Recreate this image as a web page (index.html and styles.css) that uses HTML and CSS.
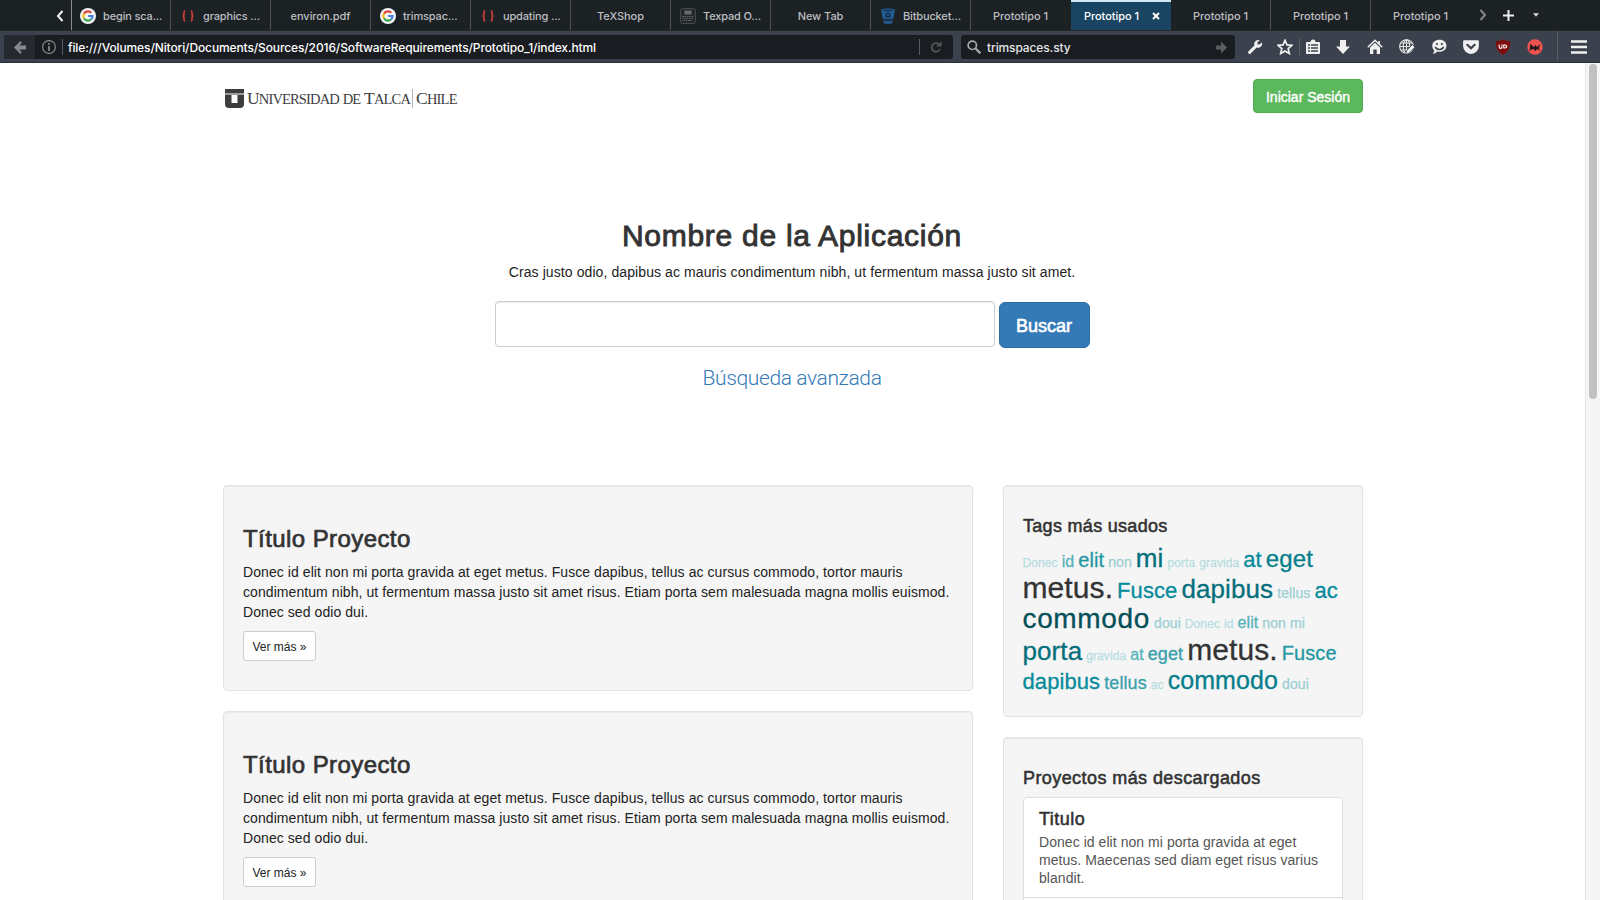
FILE: index.html
```html
<!DOCTYPE html>
<html lang="es">
<head>
<meta charset="utf-8">
<title>Prototipo 1</title>
<link rel="stylesheet" href="styles.css">
</head>
<body>
<svg class="defs" width="0" height="0">
  <symbol id="google" viewBox="0 0 16 16">
    <circle cx="8" cy="8" r="8" fill="#f4f4f4"/>
    <g fill="none" stroke-width="2.1">
      <path d="M4 5.6A4.6 4.6 0 0 1 11.3 4.8" stroke="#e2443a"/>
      <path d="M4 5.6a4.6 4.6 0 0 0 0 4.8" stroke="#f2b90f"/>
      <path d="M4 10.4a4.6 4.6 0 0 0 7.2.9" stroke="#35a551"/>
      <path d="M11.2 11.3A4.6 4.6 0 0 0 12.6 8H8.2" stroke="#447fe8"/>
    </g>
  </symbol>
  <symbol id="braces" viewBox="0 0 16 16">
    <path d="M5.3 3C3.6 3 4 4.600 4 6c0 1.300-.4 2-1.500 2C3.600 8 4 8.700 4 10c0 1.400-.4 3 1.300 3M10.700 3C12.400 3 12 4.600 12 6c0 1.300.4 2 1.500 2C12.400 8 12 8.700 12 10c0 1.400.4 3-1.300 3" fill="none" stroke="#b93a3a" stroke-width="1.900"/>
  </symbol>
</svg>
<header class="chrome">
  <div class="tabs">
    <div class="tabs-start"><svg width="8" height="12" viewBox="0 0 8 12"><path d="M6.500 1 2 6l4.500 5" fill="none" stroke="#f2f2f2" stroke-width="2"/></svg></div>
    <div class="tab with-icon first"><svg class="fav"><use href="#google"/></svg><span class="t-a">begin sca...</span></div>
    <div class="tab with-icon"><svg class="fav"><use href="#braces"/></svg><span class="t-a">graphics ...</span></div>
    <div class="tab"><span>environ.pdf</span></div>
    <div class="tab with-icon"><svg class="fav"><use href="#google"/></svg><span class="t-a">trimspac...</span></div>
    <div class="tab with-icon"><svg class="fav"><use href="#braces"/></svg><span class="t-a">updating ...</span></div>
    <div class="tab"><span>TeXShop</span></div>
    <div class="tab with-icon"><svg class="fav" viewBox="0 0 16 16"><rect x=".5" y=".5" width="15" height="15" rx="2" fill="#24272a" stroke="#484a4c"/><path d="M4.500 2.500h7v4h-7z" fill="#66686a"/><path d="M2.500 8.500h11M2.500 10.500h11M3.500 12.500h9" stroke="#66686a" stroke-dasharray="1.500 .8"/></svg><span class="t-a">Texpad O...</span></div>
    <div class="tab"><span>New Tab</span></div>
    <div class="tab with-icon"><svg class="fav" viewBox="0 0 16 16"><path d="M1 2c0-2 14-2 14 0l-1.600 8.500c-1 1.500-9.800 1.500-10.800 0z" fill="#22598f"/><path d="M3 12c2 1.300 8 1.300 10 0l-.6 3c-1.400 1.300-7.400 1.300-8.800 0z" fill="#22598f"/><ellipse cx="8" cy="2.300" rx="5" ry=".9" fill="#173a5c"/><circle cx="8" cy="7.300" r="1.900" fill="none" stroke="#152638" stroke-width="1.200"/></svg><span class="t-a">Bitbucket...</span></div>
    <div class="tab no-sep"><span>Prototipo 1</span></div>
    <div class="tab active"><span>Prototipo 1</span><svg class="close" width="8" height="8" viewBox="0 0 8 8"><path d="m1 1 6 6m0-6L1 7" stroke="#fff" stroke-width="2"/></svg></div>
    <div class="tab"><span>Prototipo 1</span></div>
    <div class="tab"><span>Prototipo 1</span></div>
    <div class="tab no-sep"><span>Prototipo 1</span></div>
    <div class="tabs-end">
      <svg width="8" height="12" viewBox="0 0 8 12"><path d="M1.500 1 6 6l-4.500 5" fill="none" stroke="#85888a" stroke-width="2"/></svg>
      <svg width="11" height="11" viewBox="0 0 11 11"><path d="M5.500 0v11M0 5.500h11" stroke="#eee" stroke-width="2"/></svg>
      <svg width="6" height="4" viewBox="0 0 6 4"><path d="M0 .3h6L3 3.700z" fill="#ddd"/></svg>
    </div>
  </div>
  <div class="toolbar">
    <div class="url">
      <div class="back"><svg width="12" height="13" viewBox="0 0 12 13"><path d="M0 6.500 6.500 0v0l1.300 1.400L5.600 4.500H12v4H5.600l2.200 3.100L6.500 13z" fill="#85898c"/></svg></div>
      <svg class="info" width="14" height="14" viewBox="0 0 14 14"><circle cx="7" cy="7" r="6.400" fill="none" stroke="#8b8e90" stroke-width="1.100"/><path d="M7 3v1.700M7 6v5" stroke="#8b8e90" stroke-width="1.700"/></svg>
      <i class="bar"></i>
      <span class="address">file:///Volumes/Nitori/Documents/Sources/2016/SoftwareRequirements/Prototipo_1/index.html</span>
      <i class="bar end"></i>
      <svg class="reload" width="12" height="12" viewBox="0 0 12 12"><path d="M9 3.300A4.300 4.300 0 1 0 10 8" fill="none" stroke="#505356" stroke-width="1.800"/><path d="M11.500 0v5.500H6z" fill="#505356"/></svg>
    </div>
    <div class="search">
      <svg width="14" height="14" viewBox="0 0 14 14"><circle cx="5.300" cy="5.300" r="4.200" fill="none" stroke="#a5a7a9" stroke-width="1.700"/><path d="m8.300 8.300 5 5" stroke="#a5a7a9" stroke-width="2.300"/></svg>
      <span class="query">trimspaces.sty</span>
      <svg width="11" height="13" viewBox="0 0 11 13"><path d="M0 4.500h5V.5l6 6-6 6v-4H0z" fill="#5b5e60"/></svg>
    </div>
    <div class="tools">
      <svg viewBox="0 0 16 16"><path d="m2.600 13.400 6-6" stroke="#f0f0f0" stroke-width="3" stroke-linecap="round"/><path d="M12.800 1.300A4.200 4.200 0 0 0 7.300 6.200L9.800 8.700a4.200 4.200 0 0 0 5-5.500L12.500 5.500l-2-.3-.2-1.700z" fill="#f0f0f0"/></svg>
      <svg viewBox="0 0 16 16"><path d="m8 1.300 2 4.600 4.900.4-3.700 3.300 1.100 4.900L8 11.900l-4.300 2.600 1.100-4.900L1.100 6.300 6 5.900z" fill="none" stroke="#f0f0f0" stroke-width="1.700"/></svg>
      <i class="bar"></i>
      <svg viewBox="0 0 16 16"><path d="M2 3h3.500a2.500 2.500 0 0 1 5 0H14a1 1 0 0 1 1 1v10a1 1 0 0 1-1 1H2a1 1 0 0 1-1-1V4a1 1 0 0 1 1-1z" fill="#f0f0f0"/><path d="M3 6h2m1 0h7M3 9h2m1 0h7M3 12h2m1 0h7" stroke="#3c424d" stroke-width="1.400"/></svg>
      <svg viewBox="0 0 16 16"><path d="M5 1h6v6.500h4L8 15 1 7.500h4z" fill="#f0f0f0"/></svg>
      <svg viewBox="0 0 16 16"><path d="M.8 8.300 8 1.300l7.200 7" fill="none" stroke="#f0f0f0" stroke-width="1.600"/><path d="M11.300 2H13v3.500L11.300 4zM3 8.500l5-4.800 5 4.800V15H9.700v-4.500H6.300V15H3z" fill="#f0f0f0"/></svg>
      <svg viewBox="0 0 16 16"><g fill="none" stroke="#e8e8e8" stroke-width="1.100"><circle cx="7.500" cy="7.500" r="6.800"/><ellipse cx="7.500" cy="7.500" rx="3.300" ry="6.800"/><path d="M.7 7.500h13.600M1.700 4h11.600M1.700 11h11.600M7.500.7v13.600"/></g><path d="m6.500 15.800 1-4L13.300 5.500l2.700 2.700-5.800 6z" fill="#f0f0f0" stroke="#3c424d" stroke-width="1"/></svg>
      <svg viewBox="0 0 16 16"><path d="M8.500.8c4.200 0 6.900 2.500 6.900 6s-2.700 6-6.900 6c-.8 0-1.600 0-2.300-.3-1.200 1.600-2.700 2.300-4.700 2.200 1.200-.8 1.700-2 1.600-3.500C1.800 10 1.300 8.500 1.300 6.800c0-3.500 3-6 7.200-6z" fill="#f0f0f0"/><circle cx="6" cy="5" r="1.100" fill="#3c424d"/><circle cx="10.800" cy="5" r="1.100" fill="#3c424d"/><path d="M4.300 7.800c1 3.600 7.300 3.600 8.300 0" fill="none" stroke="#3c424d" stroke-width="1.500"/></svg>
      <svg viewBox="0 0 16 16"><path d="M1.300 1.200h13.400a1.200 1.200 0 0 1 1.200 1.200V7A7.900 7.900 0 0 1 .1 7V2.400a1.200 1.200 0 0 1 1.200-1.200z" fill="#f0f0f0"/><path d="M4.300 5.800 8 9.300l3.700-3.500" fill="none" stroke="#3c424d" stroke-width="2.200" stroke-linecap="round"/></svg>
      <svg viewBox="0 0 16 16"><path d="M8 .2c2 1.400 4 1.900 7 1.900C15.200 8.500 14 12.400 8 15.800 2 12.400.8 8.500 1 2.100 4 2.100 6 1.600 8 .2z" fill="#800b0b"/><path d="M4.200 5.500V8c0 1.800 2.800 1.800 2.800 0V5.500M8.800 6v3h1c2.600 0 2.600-3 0-3z" fill="none" stroke="#fff" stroke-width="1.100"/></svg>
      <svg viewBox="0 0 16 16"><circle cx="8" cy="8" r="7.700" fill="#ef5350"/><path d="m2.500 12 1-7.500L6.500 8l2.200-2L9.800 8l3.700-3-1.800 4.200 1.500 3L10.500 10l-2.300 2-2.200-2.300z" fill="#25191b"/></svg>
    </div>
    <i class="bar tall"></i>
    <svg class="menu" width="16" height="14" viewBox="0 0 16 14"><path d="M0 1.500h16M0 7h16M0 12.500h16" stroke="#f0f0f0" stroke-width="2.600"/></svg>
  </div>
</header>
<div class="viewport">
  <main class="container">
    <div class="masthead">
      <div class="logo">
        <svg width="19" height="19" viewBox="0 0 19 19"><path d="M0 0h19v4.500H0zM0 5.600h19v9.400a4 4 0 0 1-4 4H4a4 4 0 0 1-4-4z" fill="#3d3d3f"/><path d="M6.500 6h6v8h-6z" fill="#fff"/></svg>
        <span class="uni"><b>U</b>NIVERSIDAD DE <b>T</b>ALCA</span><i></i><span class="chile"><b>C</b>HILE</span>
      </div>
      <button class="btn login">Iniciar Sesión</button>
    </div>
    <section class="hero">
      <h2>Nombre de la Aplicación</h2>
      <p>Cras justo odio, dapibus ac mauris condimentum nibh, ut fermentum massa justo sit amet.</p>
      <form class="finder"><input type="text" aria-label="Buscar"><button class="btn buscar" type="button">Buscar</button></form>
      <a class="advanced">Búsqueda avanzada</a>
    </section>
    <div class="columns">
      <div class="projects">
        <article class="well project">
          <h3>Título Proyecto</h3>
          <p>Donec id elit non mi porta gravida at eget metus. Fusce dapibus, tellus ac cursus commodo, tortor mauris<br>condimentum nibh, ut fermentum massa justo sit amet risus. Etiam porta sem malesuada magna mollis euismod.<br>Donec sed odio dui.</p>
          <button class="btn more">Ver más »</button>
        </article>
        <article class="well project">
          <h3>Título Proyecto</h3>
          <p>Donec id elit non mi porta gravida at eget metus. Fusce dapibus, tellus ac cursus commodo, tortor mauris<br>condimentum nibh, ut fermentum massa justo sit amet risus. Etiam porta sem malesuada magna mollis euismod.<br>Donec sed odio dui.</p>
          <button class="btn more">Ver más »</button>
        </article>
      </div>
      <aside class="side">
        <section class="well tags">
          <h4>Tags más usados</h4>
          <div class="row r1"><a class="s12">Donec</a><a class="s16">id</a><a class="s20">elit</a><a class="s14">non</a><a class="s26">mi</a><a class="s12">porta</a><a class="s12">gravida</a><a class="s22">at</a><a class="s24">eget</a></div>
          <div class="row r2"><a class="s30">metus.</a><a class="s22">Fusce</a><a class="s26">dapibus</a><a class="s14">tellus</a><a class="s22">ac</a></div>
          <div class="row r3"><a class="s28">commodo</a><a class="s14">doui</a><a class="s12">Donec</a><a class="s12">id</a><a class="s16">elit</a><a class="s14">non</a><a class="s14">mi</a></div>
          <div class="row r4"><a class="s26">porta</a><a class="s12">gravida</a><a class="s16">at</a><a class="s18">eget</a><a class="s30">metus.</a><a class="s20">Fusce</a></div>
          <div class="row r5"><a class="s22">dapibus</a><a class="s18">tellus</a><a class="s12">ac</a><a class="s24 wide">commodo</a><a class="s14">doui</a></div>
        </section>
        <section class="well downloads">
          <h4>Proyectos más descargados</h4>
          <div class="list">
            <div class="item"><h5>Titulo</h5><p>Donec id elit non mi porta gravida at eget<br>metus. Maecenas sed diam eget risus varius<br>blandit.</p></div>
            <div class="item"></div>
          </div>
        </section>
      </aside>
    </div>
  </main>
  <div class="scrollbar"><div class="thumb"></div></div>
</div>
</body>
</html>
```
FILE: styles.css
```css
* { box-sizing: border-box; }
body {
  margin: 0;
  width: 1600px;
  height: 900px;
  overflow: hidden;
  display: flex;
  flex-direction: column;
  background: #fff;
  color: #333;
  font: 14px/20px "Liberation Sans", Arial, sans-serif;
}
h2, h3, h4, h5, p { margin: 0; font-weight: 400; }
svg { display: block; flex: none; }
.defs { display: none; }

/* browser chrome */
.chrome { flex: none; height: 63px; font-family: Inter, sans-serif; font-weight: 500; background: #3b414d; border-bottom: 1px solid #2a2e37; }
.tabs { display: flex; height: 31px; background: #1c2124; font-size: 11px; line-height: 31px; letter-spacing: -.05px; color: #bcbfc1; border-bottom: 1px solid #24282c; }
.tabs-start { width: 71px; padding: 10px 0 0 56px; }
.tab { width: 100px; border-right: 1px solid #4d5153; display: flex; justify-content: center; padding-top: 1px; white-space: nowrap; }
.tab.first { border-left: 1px solid #8a8d8f; }
.tab.with-icon { justify-content: flex-start; padding-left: 9px; }
.tab.with-icon.first { padding-left: 8px; }
.fav { width: 16px; height: 16px; margin: 7px 7px 0 0; }
.t-a { letter-spacing: -.15px; }
.tab.no-sep { border-right-color: transparent; }
.tab.active { background: #194563; color: #fff; border-top: 2px solid #cfe8f8; border-right: 0; line-height: 27px; justify-content: flex-start; padding-left: 13px; }
.close { margin: 9px 0 0 13px; }
.tabs-end { display: flex; padding-left: 8px; align-items: center; }
.tabs-end svg + svg { margin-left: 16px; }
.tabs-end svg:last-child { margin: 0 0 0 19px; }
.toolbar { display: flex; height: 31px; padding: 4px 0 0 4px; }
.bar { flex: none; width: 1px; height: 16px; background: #595d61; }
.url, .search { display: flex; align-items: center; height: 24px; background: #191c20; border-radius: 3px; }
.url { width: 949px; font-size: 12px; color: #fff; }
.back { width: 31px; height: 24px; background: #262a30; border-radius: 3px 0 0 3px; padding: 6px 0 0 10px; }
.info { margin: 0 6px 0 7px; }
.address { margin-left: 5px; padding-top: 2px; flex: 1; letter-spacing: -.12px; white-space: nowrap; }
.reload { margin: 0 11px 0 10px; }
.search { width: 274px; margin-left: 8px; padding: 0 8px 0 6px; font-size: 12px; color: #e4e5e6; }
.query { flex: 1; margin-left: 6px; padding-top: 2px; letter-spacing: -.12px; }
.tools { display: flex; align-items: center; height: 24px; margin-left: 12px; }
.tools svg { width: 16px; height: 16px; margin-right: 16px; }
.tools svg:nth-child(1) { margin-right: 14px; }
.tools svg:nth-child(2) { margin-right: 6px; }
.tools .bar { margin-right: 5px; height: 18px; }
.tools svg:nth-child(4) { margin-right: 14px; }
.tools svg:last-child { margin-right: 0; }
.bar.tall { height: 30px; margin: -4px 0 0 14px; }
.menu { margin: 5px 0 0 13px; }

/* page */
.viewport { flex: 1; min-height: 0; display: flex; overflow: hidden; }
.container { width: 1140px; margin-left: 223px; }
.scrollbar { width: 15px; margin-left: auto; background: #f5f5f5; border-left: 1px solid #e4e4e4; padding: 1px 0 0 3px; }
.thumb { width: 8px; height: 335px; border-radius: 4px; background: #c1c1c1; }
.masthead { display: flex; justify-content: space-between; height: 152px; padding-top: 16px; }
.logo { display: flex; height: 19px; margin: 10px 0 0 2px; font: 14.5px/19px "Liberation Serif", serif; color: #3d3d3f; }
.logo b { font-weight: 400; font-size: 17.5px; }
.logo i { width: 1px; height: 19px; background: #b5b5b5; margin: 0 3px 0 2px; }
.uni { width: 163px; margin-left: 3px; white-space: nowrap; letter-spacing: -.85px; word-spacing: 1px; }
.chile { letter-spacing: -.8px; }
.btn { font-family: inherit; display: block; padding: 2px 0 0; border: 1px solid; border-radius: 4px; white-space: nowrap; }
.login { width: 110px; height: 34px; background: #5cb85c; border-color: #4cae4c; color: #fff; font-size: 14px; -webkit-text-stroke: .4px; }
.hero { display: flex; flex-direction: column; align-items: center; height: 270px; margin-right: 2px; text-align: center; white-space: nowrap; }
.hero h2 { font-size: 30px; line-height: 33px; margin-top: 4px; letter-spacing: .72px; -webkit-text-stroke: .9px; }
.hero p { margin-top: 10px; letter-spacing: .09px; color: #222; }
.finder { display: flex; gap: 4px; margin-top: 19px; }
.finder input { width: 500px; height: 46px; border: 1px solid #ccc; border-radius: 4px; box-shadow: inset 0 1px 1px rgba(0,0,0,.075); }
.buscar { width: 91px; height: 46px; margin-top: 1px; border-radius: 6px; background: #337ab7; border-color: #2e6da4; color: #fff; font-size: 18px; -webkit-text-stroke: .6px; }
.advanced { margin-top: 18px; color: #337ab7; letter-spacing: -.38px; font: 300 21px/24px Roboto, sans-serif; }
.columns { display: flex; gap: 30px; }
.projects { width: 750px; }
.side { width: 360px; }
.well { padding: 19px; background: #f5f5f5; border: 1px solid #e3e3e3; border-radius: 4px; box-shadow: inset 0 1px 1px rgba(0,0,0,.05); margin-bottom: 20px; white-space: nowrap; }
.project { height: 206px; }
.project h3 { margin-top: 21px; font-size: 24px; line-height: 26px; letter-spacing: .42px; -webkit-text-stroke: .7px; }
.project p { margin-top: 10px; letter-spacing: .072px; color: #222; }
.more { width: 73px; height: 30px; margin-top: 9px; background: #fff; border-color: #ccc; border-radius: 3px; font-size: 12px; color: #222; }
.well h4 { margin-top: 11px; font-size: 18px; line-height: 20px; letter-spacing: .3px; -webkit-text-stroke: .55px; }
.tags { height: 232px; }
.row { display: flex; gap: 4px; align-items: baseline; line-height: 30px; height: 30px; letter-spacing: .09px; margin-left: -.5px; }
.row::before { content: ""; width: 0; height: 25px; margin-right: -4px; }
.r1 { margin-top: 6px; height: 31px; }
.r3 { height: 32px; }
.r4 { height: 29px; }
.s12 { font-size: 12px; color: #b6dde0; -webkit-text-stroke: .25px; }
.s14 { font-size: 14px; color: #9acfd4; -webkit-text-stroke: .25px; }
.s16 { font-size: 16px; color: #55b2ba; }
.s18 { font-size: 18px; color: #389fab; }
.s20 { font-size: 20px; color: #2398a3; }
.s22 { font-size: 22px; color: #068b9c; }
.s24 { font-size: 24px; color: #057f8c; }
.s26 { font-size: 26px; color: #046f7b; }
.s28 { font-size: 28px; color: #034f59; letter-spacing: .65px; }
.s30 { font-size: 30px; color: #333; }
.s16, .s18, .s20, .s22, .s24, .s26, .s28, .s30 { -webkit-text-stroke: .3px; }
.wide { font-size: 25px; }
.downloads { height: 300px; }
.downloads h4 { letter-spacing: .42px; }
.list { margin-top: 9px; background: #fff; border: 1px solid #ddd; border-radius: 4px; }
.item { height: 100px; padding: 11px 15px 0; border-bottom: 1px solid #ddd; }
.item h5 { font-size: 18px; line-height: 20px; letter-spacing: .5px; -webkit-text-stroke: .55px; }
.item p { line-height: 18px; margin-top: 4px; letter-spacing: .05px; color: #555; }
```
